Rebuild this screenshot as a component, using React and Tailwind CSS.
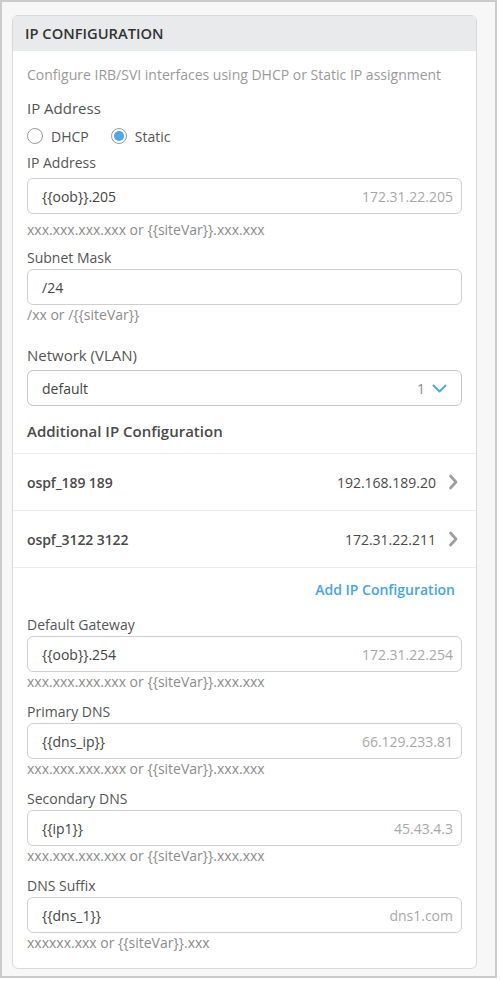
import React from "react";

const font = { fontFamily: '"Open Sans", "Liberation Sans", sans-serif' };

function Label({ children, className = "" }) {
    return <div className={`leading-5 text-[#555] ${className}`}>{children}</div>;
}

function Hint({ children, className = "" }) {
    return <div className={`text-[14px] leading-5 text-[#8c8c8c] ${className}`}>{children}</div>;
}

function Input({ value, resolved, className = "" }) {
    return (
        <div
            className={`h-[36px] flex items-center justify-between rounded-[6px] border border-[#cfcfcf] bg-white pl-[14px] pr-[8px] text-[14px] ${className}`}
        >
            <span className="text-[#444]">{value}</span>
            {resolved && <span className="text-[#a8a8a8]">{resolved}</span>}
        </div>
    );
}

function Radio({ checked, label }) {
    return (
        <label className="flex items-center gap-2 text-[14px] text-[#555]">
            <span className="w-4 h-4 rounded-full border border-[#9a9a9a] bg-white flex items-center justify-center">
                {checked && <span className="w-[10px] h-[10px] rounded-full bg-[#4aa8ee]" />}
            </span>
            {label}
        </label>
    );
}

function Row({ name, ip }) {
    return (
        <div className="h-[57px] border-b border-[#ececec] px-[14px] flex items-center justify-between">
            <span className="text-[14px] font-semibold text-[#4a4a4a] tracking-[-0.1px]">{name}</span>
            <span className="flex items-center gap-[13px] text-[14px] text-[#4a4a4a]">
                {ip}
                <svg width="9" height="16" viewBox="0 0 9 16" className="mr-[4px]">
                    <polyline points="1.5,2 7,8 1.5,14" fill="none" stroke="#9d9d9d" strokeWidth="2.6" strokeLinecap="round" strokeLinejoin="round" />
                </svg>
            </span>
        </div>
    );
}

const lower = [
    { label: "Default Gateway", value: "{{oob}}.254", resolved: "172.31.22.254", hint: "xxx.xxx.xxx.xxx or {{siteVar}}.xxx.xxx" },
    { label: "Primary DNS", value: "{{dns_ip}}", resolved: "66.129.233.81", hint: "xxx.xxx.xxx.xxx or {{siteVar}}.xxx.xxx" },
    { label: "Secondary DNS", value: "{{ip1}}", resolved: "45.43.4.3", hint: "xxx.xxx.xxx.xxx or {{siteVar}}.xxx.xxx" },
    { label: "DNS Suffix", value: "{{dns_1}}", resolved: "dns1.com", hint: "xxxxxx.xxx or {{siteVar}}.xxx" },
];

export default function App() {
    return (
        <div style={font} className="w-[497px] h-[978px] border-2 border-[#cbcbcb] bg-[#f7f7f7] pl-[10px] pt-[13px]">
            <div className="w-[465px] rounded-[6px] border border-[#d9d9d9] bg-white overflow-hidden">
                <div className="h-[35px] bg-[#e9eaeb] px-[12px] flex items-center">
                    <span className="text-[14.7px] font-semibold text-[#333]">IP CONFIGURATION</span>
                </div>

                <div className="px-[14px] pt-[14px] pb-[12px]">
                    <div className="text-[14px] leading-5 text-[#9a9a9a]">
                        Configure IRB/SVI interfaces using DHCP or Static IP assignment
                    </div>
                    <Label className="mt-[13px] text-[15px]">IP Address</Label>
                    <div className="mt-2 h-5 flex items-center gap-[22px]">
                        <Radio label="DHCP" />
                        <Radio checked label="Static" />
                    </div>
                    <Label className="mt-[7px] text-[14px]">IP Address</Label>
                    <Input className="mt-[5px]" value="{{oob}}.205" resolved="172.31.22.205" />
                    <Hint className="mt-[6px]">xxx.xxx.xxx.xxx or {"{{siteVar}}"}.xxx.xxx</Hint>
                    <Label className="mt-[8px] text-[14px]">Subnet Mask</Label>
                    <Input className="mt-[1px]" value="/24" />
                    <Hint>/xx or /{"{{siteVar}}"}</Hint>

                    <Label className="mt-[20px] text-[15px]">Network (VLAN)</Label>
                    <div className="mt-[5px] h-[36px] flex items-center justify-between rounded-[6px] border border-[#c6c6c6] bg-white pl-[14px] pr-[14px] text-[14px]">
                        <span className="text-[#444]">default</span>
                        <span className="flex items-center gap-[7px] text-[#8a8a8a]">
                            1
                            <svg width="15" height="9" viewBox="0 0 15 9">
                                <polyline points="1.5,1.5 7.5,7.5 13.5,1.5" fill="none" stroke="#4aa8ee" strokeWidth="2" strokeLinecap="round" strokeLinejoin="round" />
                            </svg>
                        </span>
                    </div>

                    <div className="mt-[15px] text-[15px] leading-5 font-semibold text-[#4a4a4a]">
                        Additional IP Configuration
                    </div>
                </div>

                <div className="border-t border-[#ececec]">
                    <Row name="ospf_189 189" ip="192.168.189.20" />
                    <Row name="ospf_3122 3122" ip="172.31.22.211" />
                </div>

                <div className="px-[14px] pb-[15px]">
                    <div className="mt-[12px] flex justify-end pr-[7px]">
                        <span className="text-[14px] leading-5 font-semibold text-[#43a5ec]">Add IP Configuration</span>
                    </div>
                    {lower.map((f, i) => (
                        <div key={f.label} className={i === 0 ? "mt-[15px]" : "mt-[10px]"}>
                            <Label className="text-[14px]">{f.label}</Label>
                            <Input className="mt-[1px]" value={f.value} resolved={f.resolved} />
                            <Hint>{f.hint}</Hint>
                        </div>
                    ))}
                </div>
            </div>
        </div>
    );
}
